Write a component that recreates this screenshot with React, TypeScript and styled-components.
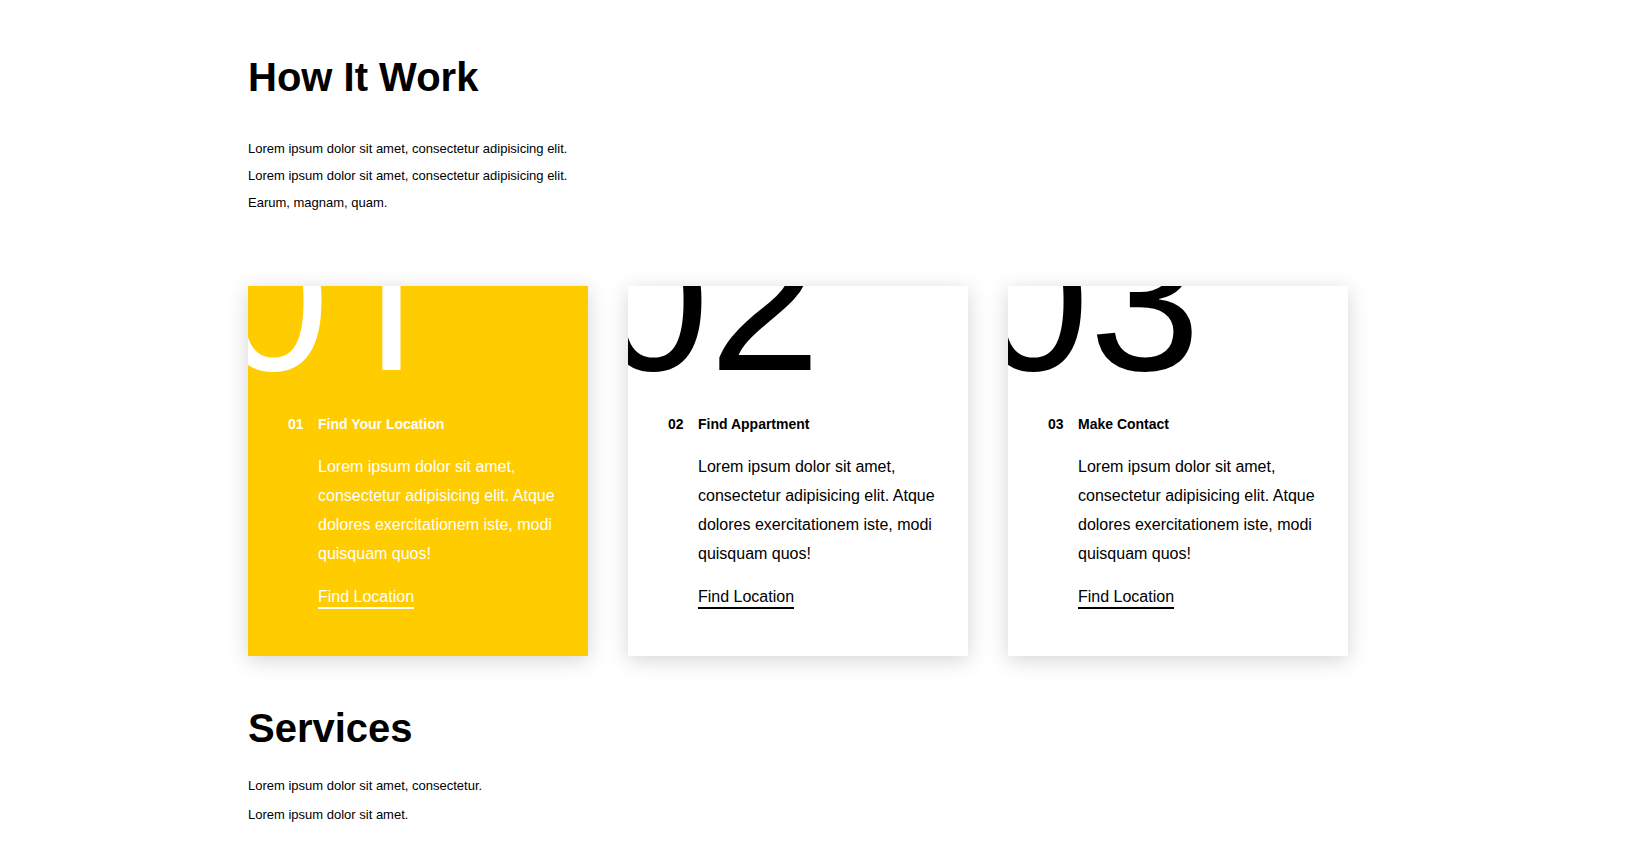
import React from "react";
import styled, { createGlobalStyle } from "styled-components";

const GlobalStyle = createGlobalStyle`
  html, body {
    margin: 0;
    padding: 0;
    background: #ffffff;
  }
  body {
    font-family: "Liberation Sans", Arial, sans-serif;
    color: #000000;
  }
  * { box-sizing: border-box; }
`;

const Page = styled.main`
  width: 100%;
`;

const Container = styled.div`
  width: 1131px;
  margin: 0 auto;
  display: flex;
  flex-direction: column;
  align-items: flex-start;
`;

const SectionTitle = styled.h1<{ $top: number }>`
  margin: ${(p) => p.$top}px 0 0;
  font-size: 40px;
  line-height: 46px;
  font-weight: 700;
`;

const Intro = styled.p<{ $top: number; $leading: number }>`
  margin: ${(p) => p.$top}px 0 0;
  font-size: 13px;
  line-height: ${(p) => p.$leading}px;
`;

const CardGrid = styled.div`
  margin-top: 70px;
  display: grid;
  grid-template-columns: repeat(3, 340px);
  gap: 40px;
`;

const Card = styled.article<{ $active?: boolean }>`
  position: relative;
  overflow: hidden;
  height: 370px;
  padding: 130px 30px 0 40px;
  background: ${(p) => (p.$active ? "#ffcc00" : "#ffffff")};
  color: ${(p) => (p.$active ? "#ffffff" : "#000000")};
  box-shadow: 0 4px 20px rgba(0, 0, 0, 0.17);
`;

const BigNumber = styled.span`
  position: absolute;
  left: -30px;
  top: -85px;
  font-family: "Liberation Sans", Arial, sans-serif;
  font-size: 200px;
  line-height: 200px;
  font-weight: 400;
  white-space: nowrap;
  color: inherit;
  pointer-events: none;
`;

/* Arial-style "1" has no foot; Liberation's has one, so that digit uses Roboto */
const Digit = styled.span<{ $plainOne?: boolean }>`
  font-family: ${(p) =>
    p.$plainOne ? 'Roboto, "Liberation Sans", sans-serif' : 'inherit'};
`;

const CardHead = styled.div`
  display: grid;
  grid-template-columns: 30px 1fr;
  font-size: 14px;
  font-weight: 700;
  line-height: 16px;
`;

const StepNo = styled.span``;

const StepTitle = styled.h3`
  margin: 0;
  font-size: 14px;
  font-weight: 700;
  line-height: 16px;
`;

const CardBody = styled.div`
  margin-left: 30px;
  display: flex;
  flex-direction: column;
  align-items: flex-start;
`;

const CardText = styled.p`
  margin: 20px 0 0;
  font-size: 16px;
  line-height: 29px;
`;

const CardLink = styled.a`
  margin-top: 20px;
  display: inline-block;
  font-size: 16px;
  line-height: 18.4px;
  color: inherit;
  text-decoration: none;
  padding-bottom: 1px;
  border-bottom: 2px solid currentColor;
`;

const steps = [
  { no: "01", title: "Find Your Location", active: true },
  { no: "02", title: "Find Appartment", active: false },
  { no: "03", title: "Make Contact", active: false },
];

export default function App() {
  return (
    <Page>
      <GlobalStyle />
      <Container>
        <SectionTitle $top={54}>How It Work</SectionTitle>
        <Intro $top={35} $leading={27}>
          Lorem ipsum dolor sit amet, consectetur adipisicing elit.
          <br />
          Lorem ipsum dolor sit amet, consectetur adipisicing elit.
          <br />
          Earum, magnam, quam.
        </Intro>
        <CardGrid>
          {steps.map((s) => (
            <Card key={s.no} $active={s.active}>
              <BigNumber>
                {s.no.split("").map((d, i) => (
                  <Digit key={i} $plainOne={d === "1"}>
                    {d}
                  </Digit>
                ))}
              </BigNumber>
              <CardHead>
                <StepNo>{s.no}</StepNo>
                <StepTitle>{s.title}</StepTitle>
              </CardHead>
              <CardBody>
                <CardText>
                  Lorem ipsum dolor sit amet, consectetur adipisicing elit. Atque
                  dolores exercitationem iste, modi quisquam quos!
                </CardText>
                <CardLink href="#">Find Location</CardLink>
              </CardBody>
            </Card>
          ))}
        </CardGrid>
        <SectionTitle $top={49}>Services</SectionTitle>
        <Intro $top={20} $leading={29}>
          Lorem ipsum dolor sit amet, consectetur.
          <br />
          Lorem ipsum dolor sit amet.
        </Intro>
      </Container>
    </Page>
  );
}
